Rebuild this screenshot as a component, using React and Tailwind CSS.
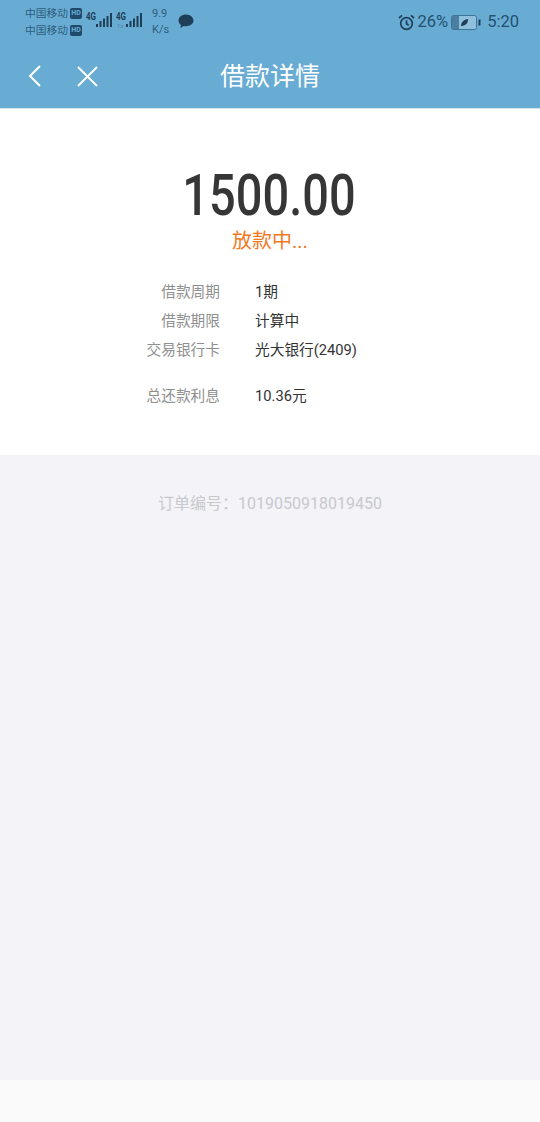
import React from 'react';

const FONT = 'font-["Roboto","Noto_Sans_CJK_SC",sans-serif]';

const ROWS = [
  { label: '借款周期', val: '1期' },
  { label: '借款期限', val: '计算中' },
  { label: '交易银行卡', val: '光大银行(2409)' },
];

const Signal = ({ sub }) => (
  <div className="relative w-[27px] h-[18px]">
    <span className="absolute left-0 top-[1px] text-[10px] leading-[10px] font-bold text-[#1f3f58] scale-x-[0.8] origin-left">4G</span>
    {sub && <span className="absolute left-[1px] top-[12px] text-[6px] leading-[6px] text-[#4f86a8]">1x</span>}
    <svg className="absolute right-0 top-0" width="17" height="18" viewBox="0 0 17 18" fill="#1f3f58">
      <rect x="0" y="13" width="2" height="3" />
      <rect x="3.500" y="10" width="2" height="6" />
      <rect x="7" y="7.500" width="2" height="8.500" />
      <rect x="10.500" y="5" width="2" height="11" />
      <rect x="14" y="2" width="2" height="14" />
    </svg>
  </div>
);

const Hd = () => (
  <span className="ml-[2px] w-[12px] h-[11px] rounded-[2px] bg-[#1f4a6b] text-[7px] leading-[11px] font-bold text-[#6aaed6] text-center">HD</span>
);

const StatusBar = () => (
  <div className="h-[44px] flex items-start justify-between pl-[25px] pr-[21px]">
    <div className="flex items-start">
      <div className="w-[58px] pt-[5px] text-[10.750px] leading-[17px] text-[#2f5c7c]">
        <div className="flex items-center">中国移动<Hd /></div>
        <div className="flex items-center">中国移动<Hd /></div>
      </div>
      <div className="flex gap-[3px] ml-[3px] pt-[11px]">
        <Signal />
        <Signal sub />
      </div>
      <div className="w-[20px] ml-[9px] pt-[6px] text-[11px] leading-[16px] text-[#2f5c7c]">
        <div>9.9</div>
        <div>K/s</div>
      </div>
      <svg className="ml-[6px] mt-[14px]" width="16" height="15" viewBox="0 0 17 16" fill="#1f3f58">
        <path d="M8.500 0.500C4 0.500 0.500 3.200 0.500 7c0 2 1 3.600 2.600 4.700L2.500 15l3.600-2.200c.8.2 1.600.2 2.400.2 4.500 0 8-2.600 8-6S13 .5 8.500.5z" />
      </svg>
    </div>
    <div className="flex items-center pt-[12px] text-[16.500px] leading-[20px] text-[#23506f]">
      <svg width="17" height="17" viewBox="0 0 17 17" fill="none" stroke="#1f3f58" strokeWidth="1.700">
        <circle cx="8.500" cy="9.500" r="5.800" />
        <path d="M8.500 6.200v3.500l2.200 1.500M1 4l3-2.600M16 4l-3-2.600" />
      </svg>
      <span className="ml-[3px]">26%</span>
      <svg className="ml-[3px]" width="30" height="15" viewBox="0 0 30 15">
        <rect x="0.500" y="0.500" width="25" height="14" rx="2" fill="#8fc1dd" stroke="#3d7396" />
        <rect x="1" y="1" width="7" height="13" fill="#4b7f9f" />
        <path d="M10 11c0-4 3-6.500 7-7 .3 4-2.500 7-7 7z" fill="#1f3f58" />
        <rect x="27.500" y="4.500" width="2" height="6" fill="#1f3f58" />
      </svg>
      <span className="ml-[6px]">5:20</span>
    </div>
  </div>
);

export default function App() {
  return (
    <div className={`${FONT} w-[540px] h-[1122px] flex flex-col bg-[#f3f3f8]`}>
      <div className="h-[109px] bg-[#68acd4] border-b border-[#d9e6ef]">
        <StatusBar />
        <div className="relative h-[64px] flex items-center justify-center">
          <div className="absolute left-[28px] top-[21px] flex items-center gap-[35px]">
            <svg width="14" height="22" viewBox="0 0 14 22" fill="none" stroke="#fff" strokeWidth="2">
              <path d="M12 1 2 11l10 10" />
            </svg>
            <svg width="21" height="21" viewBox="0 0 22 22" fill="none" stroke="#fff" strokeWidth="2">
              <path d="M1 1l20 20M21 1 1 21" />
            </svg>
          </div>
          <h1 className="mt-[2px] text-[25px] leading-[32px] text-white font-normal">借款详情</h1>
        </div>
      </div>

      <div className="h-[346px] bg-white flex flex-col items-center">
        <div className="mt-[51px] ml-[-3px] text-[58px] leading-[70px] font-medium text-[#363636] scale-x-[0.81]">1500.00</div>
        <div className="mt-[-3px] text-[20px] leading-[28px] text-[#f0791f]">放款中...</div>

        <div className="mt-[25px] w-full flex flex-col gap-[5px]">
          {ROWS.map(({ label, val }) => (
            <div key={label} className="flex text-[14.700px] leading-[24px]">
              <span className="w-[220px] text-right text-[#8f8f8f]">{label}</span>
              <span className="ml-[35px] text-[#333]">{val}</span>
            </div>
          ))}
          <div className="mt-[17px] flex text-[14.700px] leading-[24px]">
            <span className="w-[220px] text-right text-[#8f8f8f]">总还款利息</span>
            <span className="ml-[35px] text-[#333]">10.36元</span>
          </div>
        </div>
      </div>

      <div className="flex-1 pt-[37px] text-center text-[16px] leading-[24px] text-[#c9c9cd]">
        订单编号：1019050918019450
      </div>

      <div className="h-[42px] bg-[#fafafa]" />
    </div>
  );
}
